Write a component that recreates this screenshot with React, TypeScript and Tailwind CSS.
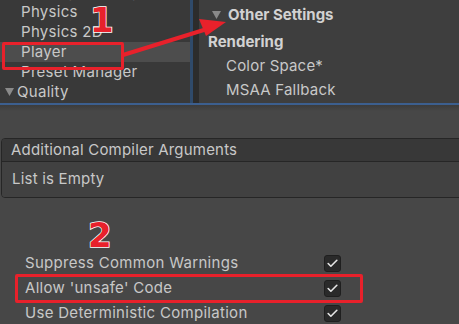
import { Check } from 'lucide-react'

const leftItems = [
  { label: 'Package Manager' },
  { label: 'Physics' },
  { label: 'Physics 2D' },
  { label: 'Player', selected: true },
  { label: 'Preset Manager' },
  { label: 'Quality', foldout: true },
]

const toggles = ['Suppress Common Warnings', "Allow 'unsafe' Code", 'Use Deterministic Compilation']

function Triangle() {
  return (
    <svg width="9" height="8" viewBox="0 0 9 8" className="shrink-0">
      <path d="M0 0 H9 L4.5 8 Z" fill="#8a8a8a" />
    </svg>
  )
}

function Badge({ n, className }: { n: string; className: string }) {
  return (
    <span
      className={`absolute font-['DejaVu_Sans'] text-[34px] font-bold leading-none text-[#e8212b] ${className}`}
      style={{ WebkitTextStroke: '1.5px #ffffff', paintOrder: 'stroke fill' }}
    >
      {n}
    </span>
  )
}

export default function App() {
  return (
    <div className="relative h-[324px] w-[459px] overflow-hidden bg-[#474747] font-['Inter',sans-serif] text-[15px] text-[#c8c8c8]">
      {/* top split view */}
      <div className="flex h-[103px]">
        <div className="w-[190px] overflow-hidden bg-[#393939]">
          <div className="-mt-[18px]">
            {leftItems.map((it) => (
              <div
                key={it.label}
                className={`flex h-[20px] items-center gap-[3px] ${it.foldout ? 'pl-[5px]' : 'pl-[21px]'} ${it.selected ? 'bg-[#4d4d4d]' : ''}`}
              >
                {it.foldout && <Triangle />}
                <span className="tracking-[0.3px]">{it.label}</span>
              </div>
            ))}
          </div>
        </div>
        <div className="w-[3px] bg-[#2f4a6a]" />
        <div className="w-[6px] bg-[#2c2c2c]" />
        <div className="flex-1 bg-[#3e3e3e]">
          <div className="flex h-[22px] items-center gap-[7px] pt-[8px] pl-[13px]">
            <Triangle />
            <span className="font-bold text-[#d2d2d2]">Other Settings</span>
          </div>
          <div className="mt-[10px] flex h-[20px] items-center pl-[9px] font-bold text-[#d2d2d2]">Rendering</div>
          <div className="mt-[4px] flex h-[20px] items-center pl-[27px] tracking-[0.2px]">Color Space*</div>
          <div className="mt-[4px] flex h-[20px] items-center pl-[27px] tracking-[0.2px]">MSAA Fallback</div>
        </div>
      </div>
      <div className="h-[2px] bg-[#3c5f8f]" />
      <div className="h-[6px] bg-gradient-to-b from-[#3c3c3c] to-[#474747]" />

      {/* compiler arguments list */}
      <div className="ml-[1px] mt-[27px] -mr-[6px] overflow-hidden rounded-[4px] border border-[#262626]">
        <div className="flex h-[23px] items-center border-b border-[#262626] bg-[#383838] pl-[9px] tracking-[0.2px]">
          Additional Compiler Arguments
        </div>
        <div className="flex h-[35px] items-center bg-[#414141] pl-[10px] tracking-[0.2px]">List is Empty</div>
      </div>

      {/* toggles */}
      <div className="mt-[53px]">
        {toggles.map((t) => (
          <div key={t} className="flex h-[25px] items-center pl-[25px]">
            <span className="w-[299px] tracking-[0.3px]">{t}</span>
            <div className="flex h-[17px] w-[17px] items-center justify-center rounded-[3px] border border-[#1f1f1f] bg-[#2a2a2a]">
              <Check size={13} strokeWidth={3} color="#e6e6e6" />
            </div>
          </div>
        ))}
      </div>

      {/* annotations */}
      <div className="absolute left-[2px] top-[42px] h-[28px] w-[122px] rounded-[2px] border-[3px] border-[#e8212b]" />
      <div className="absolute left-[15px] top-[274px] h-[29px] w-[348px] rounded-[2px] border-[3px] border-[#e8212b]" />
      <svg className="absolute left-0 top-0" width="459" height="324">
        <line x1="123" y1="55" x2="207" y2="29" stroke="#e8212b" strokeWidth="4" />
        <path d="M226 22 L199 19 L206 36 Z" fill="#e8212b" />
      </svg>
      <Badge n="1" className="left-[90px] top-[3px]" />
      <Badge n="2" className="left-[88px] top-[218px]" />
    </div>
  )
}
